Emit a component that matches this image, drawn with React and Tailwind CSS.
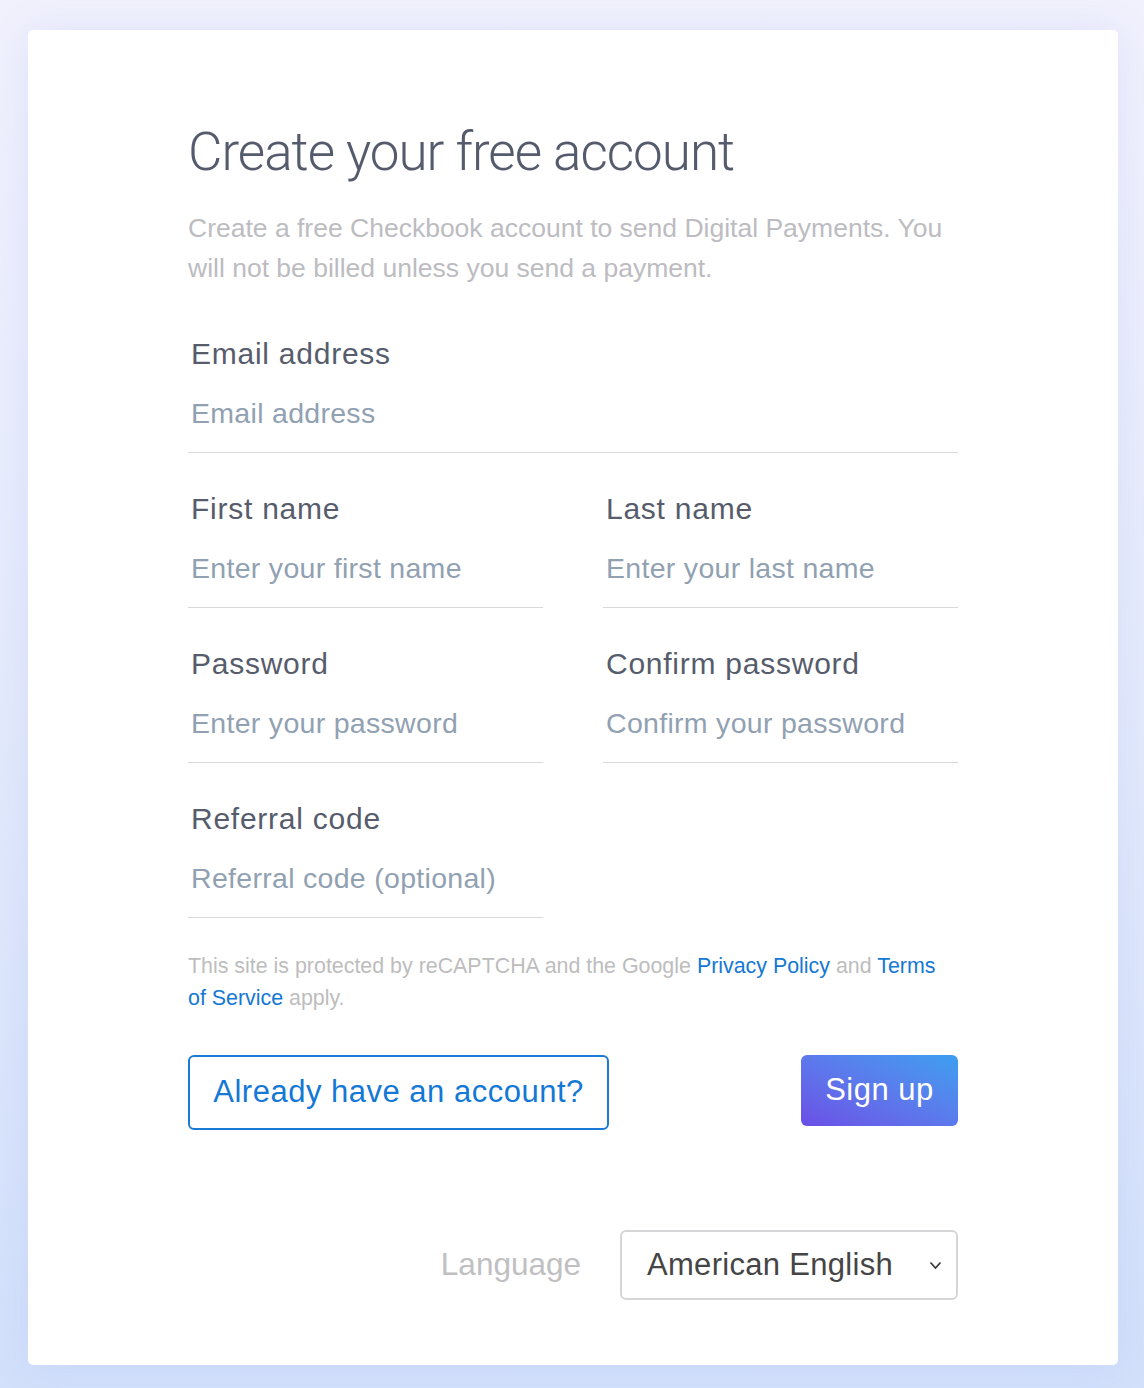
import React from "react";

const sans = "font-['Liberation_Sans',Arial,sans-serif]";

function Field({ label, placeholder }) {
  return (
    <div className="flex flex-col">
      <p className="h-[40px] leading-[40px] pl-[3px] text-[30px] tracking-[0.75px] text-[#565c6c]">
        {label}
      </p>
      <input
        className="h-[79px] pt-[19px] pb-[19px] pl-[3px] text-[28.5px] leading-[40px] tracking-[0.3px] border-b border-[#d9d9dc] outline-none bg-transparent text-[#535a6b] placeholder:text-[#91a1b2]"
        placeholder={placeholder}
      />
    </div>
  );
}

export default function App() {
  return (
    <div className={`w-full min-h-[1388px] pt-[30px] pb-[23px] bg-linear-to-b from-[#f1f1fd] via-[#e4eafc] to-[#d2e0fb] ${sans}`}>
      {/* Card */}
      <div className="ml-[28px] w-[1090px] bg-white rounded-[5px] shadow-[0_0_40px_rgba(110,130,220,0.12)] pl-[160px] pt-[92px] pb-[65px]">
        <div className="w-[770px]">
          <h1 className="h-[60px] leading-[60px] text-[53px] font-light text-[#555b6d] font-['Roboto',sans-serif] tracking-[-1px]">
            Create your free account
          </h1>
          <p className="mt-[26px] text-[26.5px] leading-[40px] text-[#bcbcc1]">
            Create a free Checkbook account to send Digital Payments. You will not be billed unless you send a payment.
          </p>

          <div className="mt-[46px]">
            <Field label="Email address" placeholder="Email address" />
          </div>

          <div className="mt-[36px] grid grid-cols-2 gap-x-[60px] gap-y-[36px]">
            <Field label="First name" placeholder="Enter your first name" />
            <Field label="Last name" placeholder="Enter your last name" />
            <Field label="Password" placeholder="Enter your password" />
            <Field label="Confirm password" placeholder="Confirm your password" />
            <Field label="Referral code" placeholder="Referral code (optional)" />
          </div>

          <p className="mt-[32px] max-w-[760px] text-[21.4px] leading-[32px] text-[#bdbdbd]">
            This site is protected by reCAPTCHA and the Google{" "}
            <a className="text-[#1478d4]">Privacy Policy</a> and{" "}
            <a className="text-[#1478d4]">Terms of Service</a> apply.
          </p>

          <div className="mt-[41px] flex items-start justify-between">
            <button className="w-[421px] h-[75px] rounded-[6px] border-2 border-[#1a7bd6] text-[31px] text-[#1478d4] tracking-[0.5px]">
              Already have an account?
            </button>
            <button className="w-[157px] h-[71px] rounded-[6px] bg-linear-to-tr from-[#6a4ee6] to-[#3a9ff0] text-[31px] text-white tracking-[0.5px]">
              Sign up
            </button>
          </div>

          <div className="mt-[100px] flex items-center justify-end gap-[39px]">
            <span className="text-[31.5px] text-[#c0c0c2]">Language</span>
            <div className="w-[338px] h-[70px] rounded-[6px] border-2 border-[#d6d6d8] flex items-center justify-between pl-[25px] pr-[14px]">
              <span className="text-[31px] tracking-[0.3px] text-[#454545]">American English</span>
              <svg width="13" height="9" viewBox="0 0 13 9" fill="none" stroke="#333" strokeWidth="1.6">
                <path d="M1.5 1.5 L6.5 7 L11.5 1.5" />
              </svg>
            </div>
          </div>
        </div>
      </div>
    </div>
  );
}
